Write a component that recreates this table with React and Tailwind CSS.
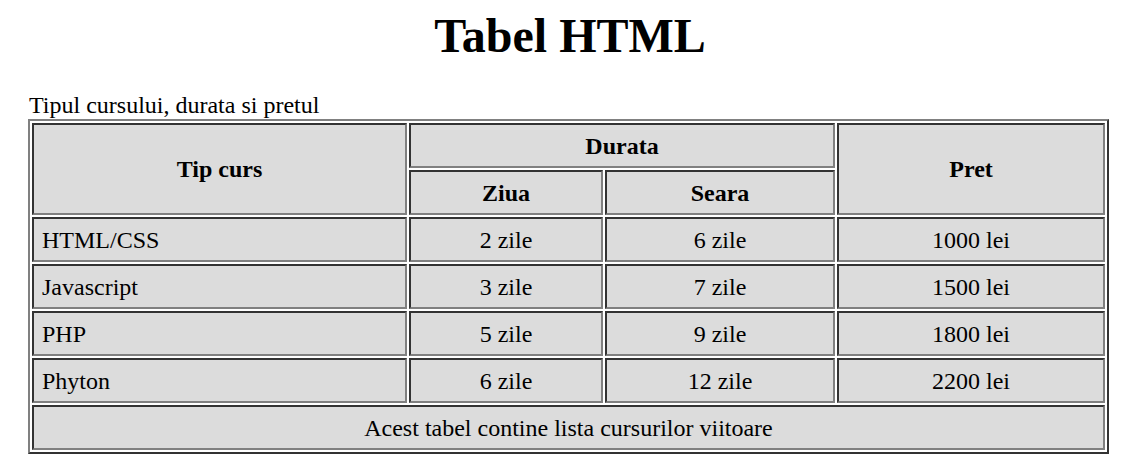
const rows = [
  { curs: "HTML/CSS", ziua: "2 zile", seara: "6 zile", pret: "1000 lei" },
  { curs: "Javascript", ziua: "3 zile", seara: "7 zile", pret: "1500 lei" },
  { curs: "PHP", ziua: "5 zile", seara: "9 zile", pret: "1800 lei" },
  { curs: "Phyton", ziua: "6 zile", seara: "12 zile", pret: "2200 lei" },
];

const cell =
  "bg-[#dcdcdc] border-2 border-t-[#333333] border-l-[#333333] border-b-[#808080] border-r-[#808080] px-[8px] py-0 h-[45px] align-middle";

export default function App() {
  return (
    <div className="min-h-screen bg-white text-black font-['Liberation_Serif','Times_New_Roman',serif] pt-[8px]">
      {/* Title */}
      <h1 className="text-center font-bold text-[48px] leading-[56px]">Tabel HTML</h1>

      <table className="ml-[28px] mt-[28px] w-[1081px] table-fixed border-separate border-spacing-[2px] border-2 border-t-[#808080] border-l-[#808080] border-b-[#333333] border-r-[#333333] text-[24px]">
        <caption className="text-left leading-[27px] pl-[1px]">Tipul cursului, durata si pretul</caption>
        <colgroup>
          <col className="w-[375px]" />
          <col className="w-[194px]" />
          <col className="w-[230px]" />
          <col className="w-[268px]" />
        </colgroup>
        <thead>
          <tr>
            <th rowSpan={2} className={`${cell} text-center font-bold`}>
              Tip curs
            </th>
            <th colSpan={2} className={`${cell} text-center font-bold`}>
              Durata
            </th>
            <th rowSpan={2} className={`${cell} text-center font-bold`}>
              Pret
            </th>
          </tr>
          <tr>
            <th className={`${cell} text-center font-bold`}>Ziua</th>
            <th className={`${cell} text-center font-bold`}>Seara</th>
          </tr>
        </thead>
        <tbody>
          {rows.map((r) => (
            <tr key={r.curs}>
              <td className={`${cell} text-left`}>{r.curs}</td>
              <td className={`${cell} text-center`}>{r.ziua}</td>
              <td className={`${cell} text-center`}>{r.seara}</td>
              <td className={`${cell} text-center`}>{r.pret}</td>
            </tr>
          ))}
        </tbody>
        <tfoot>
          <tr>
            <td colSpan={4} className={`${cell} text-center`}>
              Acest tabel contine lista cursurilor viitoare
            </td>
          </tr>
        </tfoot>
      </table>
    </div>
  );
}
